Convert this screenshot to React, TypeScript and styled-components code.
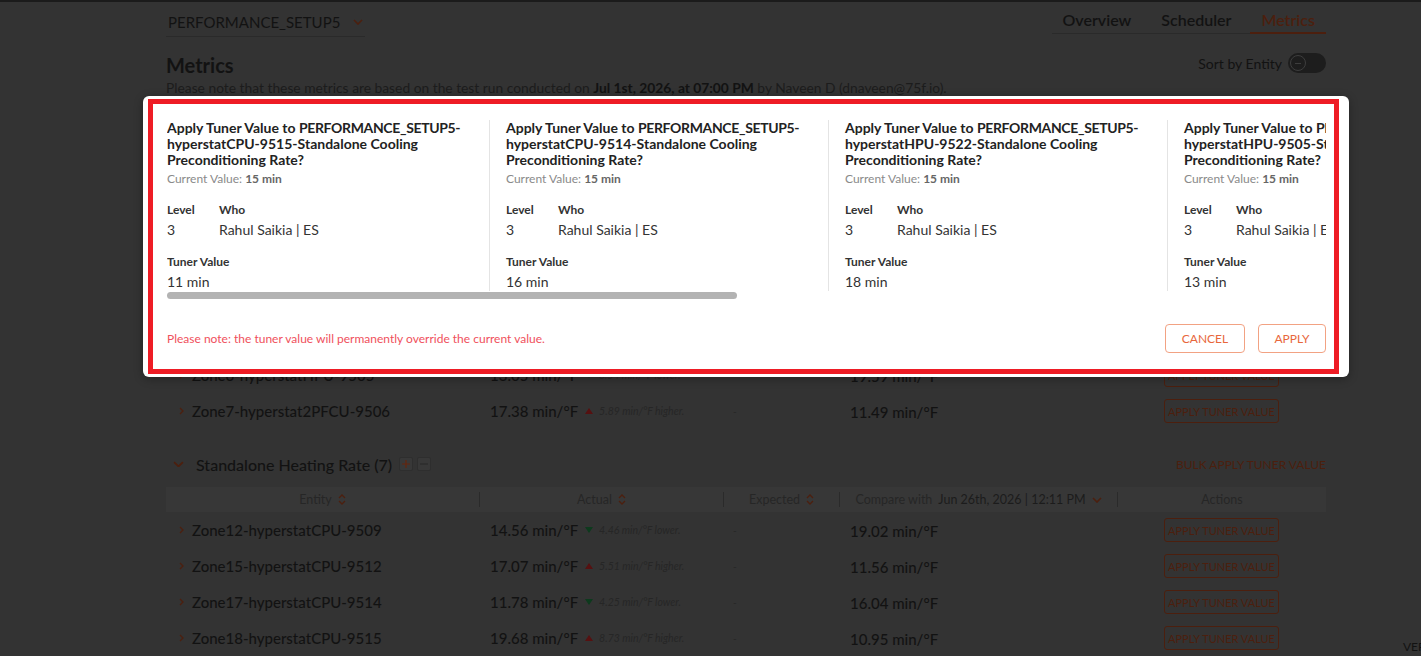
import React from 'react'
import styled, { createGlobalStyle } from 'styled-components'

// page colours as they look under the modal backdrop
const dim = {
  bg: '#333333',
  text: '#121212',
  soft: '#1c1c1c',
  muted: '#262626',
  line: '#2a2a2a',
  head: '#373737',
  orange: '#4c1f0e',
  orangeHi: '#66250c',
  up: '#561111',
  down: '#0d3a1d',
}

const GlobalStyle = createGlobalStyle`
  html, body {
    margin: 0;
    padding: 0;
    background: ${dim.bg};
    overflow: hidden;
  }
  body {
    font-family: Lato, 'Open Sans', sans-serif;
  }
  * {
    box-sizing: border-box;
  }
`

const Screen = styled.div`
  position: relative;
  width: 1421px;
  height: 656px;
  overflow: hidden;
`

const TopBar = styled.div`
  height: 2px;
  background: #1b1b1b;
`

const Page = styled.div`
  width: 1160px;
  margin-left: 166px;
`

const Header = styled.div`
  display: flex;
  justify-content: space-between;
  align-items: flex-start;
`

const SiteSelect = styled.div`
  margin-top: 8px;
  width: 199px;
  height: 27px;
  padding: 0 2px 3px 2px;
  display: flex;
  align-items: center;
  justify-content: space-between;
  border-bottom: 1px solid ${dim.line};
  font-size: 15px;
  color: ${dim.text};
`

const Tabs = styled.div`
  margin-top: 4px;
  display: flex;
  gap: 8px;
  border-bottom: 1px solid ${dim.line};
`

const Tab = styled.div<{ $active?: boolean }>`
  padding: 4px 11px 2px;
  font-size: 16px;
  line-height: 20px;
  font-weight: 600;
  color: ${(p) => (p.$active ? dim.orange : dim.text)};
  border-bottom: 2px solid ${(p) => (p.$active ? dim.orange : 'transparent')};
  margin-bottom: -1px;
`

const TitleRow = styled.div`
  margin-top: 16px;
  display: flex;
  justify-content: space-between;
  align-items: flex-start;
`

const PageTitle = styled.h1`
  margin: 0;
  font-size: 20px;
  line-height: 24px;
  font-weight: 700;
  color: ${dim.text};
`

const SortBox = styled.div`
  display: flex;
  align-items: center;
  gap: 6px;
  font-size: 14px;
  color: ${dim.text};
`

const Toggle = styled.div`
  width: 38px;
  height: 20px;
  border-radius: 10px;
  background: #1d1d1d;
  padding: 2px;
  display: flex;
  align-items: center;
`

const Knob = styled.div`
  width: 16px;
  height: 16px;
  border-radius: 50%;
  border: 1px solid #3d3d3d;
  display: flex;
  align-items: center;
  justify-content: center;

  &::after {
    content: '';
    width: 6px;
    height: 1px;
    background: #3d3d3d;
  }
`

const Note = styled.p`
  margin: 2px 0 0;
  font-size: 13.8px;
  line-height: 18px;
  color: ${dim.soft};

  b {
    font-weight: 700;
    color: ${dim.text};
  }
`

const Section = styled.section<{ $gap: number }>`
  margin-top: ${(p) => p.$gap}px;
`

const SectionHead = styled.div`
  height: 24px;
  display: flex;
  align-items: center;
  justify-content: space-between;
`

const SectionLeft = styled.div`
  display: flex;
  align-items: center;
  padding-left: 7px;
`

const SectionTitle = styled.span`
  margin-left: 12px;
  font-size: 16px;
  font-weight: 500;
  color: ${dim.text};
`

const MiniButton = styled.span<{ $on?: boolean }>`
  width: 14px;
  height: 14px;
  margin-left: ${(p) => (p.$on ? 7 : 4)}px;
  border: 1px solid #2e2e2e;
  border-radius: 2px;
  background: #383838;
  display: flex;
  align-items: center;
  justify-content: center;
`

const BulkLink = styled.span`
  font-size: 12px;
  color: ${dim.orange};
`

const columns = '313px 244px 116px 278px 209px'

const TableHead = styled.div`
  margin-top: 11px;
  height: 25px;
  display: grid;
  grid-template-columns: ${columns};
  align-items: center;
  background: ${dim.head};
`

const HeadCell = styled.div<{ $first?: boolean }>`
  height: 15px;
  display: flex;
  align-items: center;
  justify-content: center;
  gap: 6px;
  font-size: 12.5px;
  color: ${dim.muted};
  border-left: ${(p) => (p.$first ? 'none' : `1px solid ${dim.line}`)};

  b {
    font-weight: 400;
    color: ${dim.soft};
  }
`

const Row = styled.div`
  height: 36px;
  display: grid;
  grid-template-columns: ${columns};
  align-items: center;
`

const EntityCell = styled.div`
  padding-left: 13px;
  display: flex;
  align-items: center;
  gap: 8px;
  font-size: 15px;
  font-weight: 500;
  color: ${dim.text};
`

const ActualCell = styled.div`
  padding-left: 11px;
  display: flex;
  align-items: center;
`

const Value = styled.span`
  font-size: 15px;
  font-weight: 500;
  color: ${dim.text};
`

const Delta = styled.span`
  margin-left: 7px;
  display: flex;
  align-items: center;
  gap: 6px;
  font-size: 10.5px;
  font-style: italic;
  color: ${dim.muted};
`

const Triangle = styled.span<{ $up: boolean }>`
  width: 0;
  height: 0;
  border-left: 4px solid transparent;
  border-right: 4px solid transparent;
  ${(p) =>
    p.$up
      ? `border-bottom: 6px solid ${dim.up};`
      : `border-top: 6px solid ${dim.down};`}
`

const DashCell = styled.div`
  padding-left: 10px;
  font-size: 10px;
  color: ${dim.muted};
`

const CompareCell = styled.div`
  padding-left: 11px;
`

const ActionCell = styled.div`
  display: flex;
  justify-content: center;
`

const OutlineButton = styled.button`
  width: 115px;
  height: 24px;
  padding: 0;
  border: 1px solid ${dim.orange};
  border-radius: 3px;
  background: transparent;
  font-family: inherit;
  font-size: 11px;
  font-weight: 400;
  color: ${dim.orange};
`

const Version = styled.div`
  position: absolute;
  left: 1403px;
  top: 639px;
  font-size: 12px;
  color: ${dim.text};
  white-space: nowrap;
`

/* ---------- modal ---------- */

const Modal = styled.div`
  position: absolute;
  left: 143px;
  top: 96px;
  width: 1206px;
  padding: 24px 23px 24px 24px;
  background: #fff;
  border-radius: 6px;
  box-shadow: 0 2px 10px rgba(0, 0, 0, 0.3);
`

const Highlight = styled.div`
  position: absolute;
  left: 5px;
  top: 3px;
  right: 10px;
  bottom: 3px;
  border: 5px solid #ee1c25;
  pointer-events: none;
`

const Strip = styled.div`
  display: flex;
  overflow: hidden;
`

const Card = styled.div<{ $first?: boolean }>`
  flex: 0 0 auto;
  width: ${(p) => (p.$first ? 323 : 339)}px;
  padding: 0 8px 0 ${(p) => (p.$first ? 0 : 16)}px;
  border-right: 1px solid #e4e4e4;
`

const CardTitle = styled.h3`
  margin: 0;
  font-size: 14px;
  line-height: 16px;
  font-weight: 700;
  color: #222;
`

const TitleLead = styled.span`
  white-space: nowrap;

  em {
    font-style: normal;
    letter-spacing: -0.35px;
  }
`

const Current = styled.div`
  margin-top: 3px;
  font-size: 12px;
  line-height: 16px;
  color: #8a8a8a;

  b {
    color: #666;
  }
`

const Fields = styled.div`
  margin-top: 15px;
  display: grid;
  grid-template-columns: 52px 1fr;
`

const Label = styled.div`
  font-size: 12px;
  line-height: 16px;
  font-weight: 700;
  color: #333;
`

const FieldValue = styled.div`
  margin-top: 3px;
  font-size: 14px;
  line-height: 18px;
  color: #333;
  white-space: nowrap;
`

const TunerBlock = styled.div`
  margin-top: 15px;
`

const Track = styled.div`
  margin-top: 1px;
  height: 7px;
`

const Thumb = styled.div`
  height: 7px;
  border-radius: 4px;
  background: #b3b3b3;
`

const Footer = styled.div`
  margin-top: 25px;
  display: flex;
  align-items: center;
  justify-content: space-between;
`

const Warning = styled.span`
  font-size: 12px;
  color: #f0505c;
`

const Buttons = styled.div`
  display: flex;
  gap: 13px;
`

const ModalButton = styled.button<{ $w: number }>`
  width: ${(p) => p.$w}px;
  height: 29px;
  padding: 0;
  border: 1px solid #f2a283;
  border-radius: 4px;
  background: #fff;
  font-family: inherit;
  font-size: 12px;
  color: #e8673c;
`

/* ---------- icons ---------- */

const ChevronDown = ({ color, size = 10 }: { color: string; size?: number }) => (
  <svg width={size} height={size * 0.6} viewBox="0 0 10 6">
    <path d="M1 1l4 4 4-4" fill="none" stroke={color} strokeWidth="1.6" />
  </svg>
)

const ChevronRight = () => (
  <svg width="5" height="8" viewBox="0 0 5 8">
    <path d="M1 1l3 3-3 3" fill="none" stroke={dim.orange} strokeWidth="1.3" />
  </svg>
)

const SortIcon = () => (
  <svg width="8" height="11" viewBox="0 0 8 11">
    <path d="M1 4l3-3 3 3M1 7l3 3 3-3" fill="none" stroke={dim.orange} strokeWidth="1.3" />
  </svg>
)

const PlusMinus = ({ plus, color }: { plus?: boolean; color: string }) => (
  <svg width="8" height="8" viewBox="0 0 8 8">
    <path d={plus ? 'M0 4h8M4 0v8' : 'M0 4h8'} stroke={color} strokeWidth="1.2" />
  </svg>
)

/* ---------- data ---------- */

interface Metric {
  entity: string
  actual: string
  delta: string
  up: boolean
  compare: string
}

const coolingRows: Metric[] = [
  { entity: 'Zone1-hyperstatCPU-9500', actual: '15.12 min/°F', delta: '2.31 min/°F higher.', up: true, compare: '12.81 min/°F' },
  { entity: 'Zone2-hyperstatCPU-9501', actual: '13.44 min/°F', delta: '3.02 min/°F lower.', up: false, compare: '16.46 min/°F' },
  { entity: 'Zone3-hyperstatHPU-9502', actual: '18.27 min/°F', delta: '4.88 min/°F higher.', up: true, compare: '13.39 min/°F' },
  { entity: 'Zone4-hyperstatCPU-9503', actual: '12.90 min/°F', delta: '1.75 min/°F lower.', up: false, compare: '14.65 min/°F' },
  { entity: 'Zone5-hyperstatHPU-9504', actual: '16.71 min/°F', delta: '2.09 min/°F higher.', up: true, compare: '14.62 min/°F' },
  { entity: 'Zone6-hyperstatHPU-9505', actual: '13.05 min/°F', delta: '6.54 min/°F lower.', up: false, compare: '19.59 min/°F' },
  { entity: 'Zone7-hyperstat2PFCU-9506', actual: '17.38 min/°F', delta: '5.89 min/°F higher.', up: true, compare: '11.49 min/°F' },
]

const heatingRows: Metric[] = [
  { entity: 'Zone12-hyperstatCPU-9509', actual: '14.56 min/°F', delta: '4.46 min/°F lower.', up: false, compare: '19.02 min/°F' },
  { entity: 'Zone15-hyperstatCPU-9512', actual: '17.07 min/°F', delta: '5.51 min/°F higher.', up: true, compare: '11.56 min/°F' },
  { entity: 'Zone17-hyperstatCPU-9514', actual: '11.78 min/°F', delta: '4.25 min/°F lower.', up: false, compare: '16.04 min/°F' },
  { entity: 'Zone18-hyperstatCPU-9515', actual: '19.68 min/°F', delta: '8.73 min/°F higher.', up: true, compare: '10.95 min/°F' },
]

const tuners = [
  { equip: 'hyperstatCPU-9515', value: '11 min' },
  { equip: 'hyperstatCPU-9514', value: '16 min' },
  { equip: 'hyperstatHPU-9522', value: '18 min' },
  { equip: 'hyperstatHPU-9505', value: '13 min' },
  { equip: 'hyperstat2PFCU-9506', value: '12 min' },
  { equip: 'hyperstatCPU-9509', value: '14 min' },
  { equip: 'hyperstatCPU-9512', value: '17 min' },
]

const STRIP_WIDTH = 1159

/* ---------- parts ---------- */

const MetricSection = ({
  title,
  count,
  rows,
  gap,
}: {
  title: string
  count: number
  rows: Metric[]
  gap: number
}) => (
  <Section $gap={gap}>
    <SectionHead>
      <SectionLeft>
        <ChevronDown color={dim.orange} size={11} />
        <SectionTitle>
          {title} ({count})
        </SectionTitle>
        <MiniButton $on>
          <PlusMinus plus color={dim.orangeHi} />
        </MiniButton>
        <MiniButton>
          <PlusMinus color="#2a2a2a" />
        </MiniButton>
      </SectionLeft>
      <BulkLink>BULK APPLY TUNER VALUE</BulkLink>
    </SectionHead>
    <TableHead>
      <HeadCell $first>
        Entity <SortIcon />
      </HeadCell>
      <HeadCell>
        Actual <SortIcon />
      </HeadCell>
      <HeadCell>
        Expected <SortIcon />
      </HeadCell>
      <HeadCell>
        Compare with <b>Jun 26th, 2026 | 12:11 PM</b> <ChevronDown color={dim.orange} />
      </HeadCell>
      <HeadCell>Actions</HeadCell>
    </TableHead>
    {rows.map((r) => (
      <Row key={r.entity}>
        <EntityCell>
          <ChevronRight />
          {r.entity}
        </EntityCell>
        <ActualCell>
          <Value>{r.actual}</Value>
          <Delta>
            <Triangle $up={r.up} />
            {r.delta}
          </Delta>
        </ActualCell>
        <DashCell>-</DashCell>
        <CompareCell>
          <Value>{r.compare}</Value>
        </CompareCell>
        <ActionCell>
          <OutlineButton>APPLY TUNER VALUE</OutlineButton>
        </ActionCell>
      </Row>
    ))}
  </Section>
)

const TunerModal = () => {
  const total = 323 + (tuners.length - 1) * 339
  const thumb = Math.round((STRIP_WIDTH * STRIP_WIDTH) / total)

  return (
    <Modal>
      <Strip>
        {tuners.map((t, i) => (
          <Card key={t.equip} $first={i === 0}>
            <CardTitle>
              <TitleLead>
                Apply Tuner Value to <em>PERFORMANCE_SETUP5-</em>
              </TitleLead>
              <wbr />
              {t.equip}-Standalone Cooling Preconditioning Rate?
            </CardTitle>
            <Current>
              Current Value: <b>15 min</b>
            </Current>
            <Fields>
              <Label>Level</Label>
              <Label>Who</Label>
              <FieldValue>3</FieldValue>
              <FieldValue>Rahul Saikia | ES</FieldValue>
            </Fields>
            <TunerBlock>
              <Label>Tuner Value</Label>
              <FieldValue>{t.value}</FieldValue>
            </TunerBlock>
          </Card>
        ))}
      </Strip>
      <Track>
        <Thumb style={{ width: thumb }} />
      </Track>
      <Footer>
        <Warning>Please note: the tuner value will permanently override the current value.</Warning>
        <Buttons>
          <ModalButton $w={80}>CANCEL</ModalButton>
          <ModalButton $w={68}>APPLY</ModalButton>
        </Buttons>
      </Footer>
      <Highlight />
    </Modal>
  )
}

export default function App() {
  return (
    <Screen>
      <GlobalStyle />
      <TopBar />
      <Page>
        <Header>
          <SiteSelect>
            PERFORMANCE_SETUP5
            <ChevronDown color={dim.orange} />
          </SiteSelect>
          <Tabs>
            <Tab>Overview</Tab>
            <Tab>Scheduler</Tab>
            <Tab $active>Metrics</Tab>
          </Tabs>
        </Header>
        <TitleRow>
          <PageTitle>Metrics</PageTitle>
          <SortBox>
            Sort by Entity
            <Toggle>
              <Knob />
            </Toggle>
          </SortBox>
        </TitleRow>
        <Note>
          Please note that these metrics are based on the test run conducted on <b>Jul 1st, 2026, at 07:00 PM</b> by
          Naveen D (dnaveen@75f.io).
        </Note>
        <MetricSection title="Standalone Cooling Preconditioning Rate" count={7} rows={coolingRows} gap={20} />
        <MetricSection title="Standalone Heating Rate" count={7} rows={heatingRows} gap={23} />
      </Page>
      <Version>VERSION 2.4.1</Version>
      <TunerModal />
    </Screen>
  )
}
